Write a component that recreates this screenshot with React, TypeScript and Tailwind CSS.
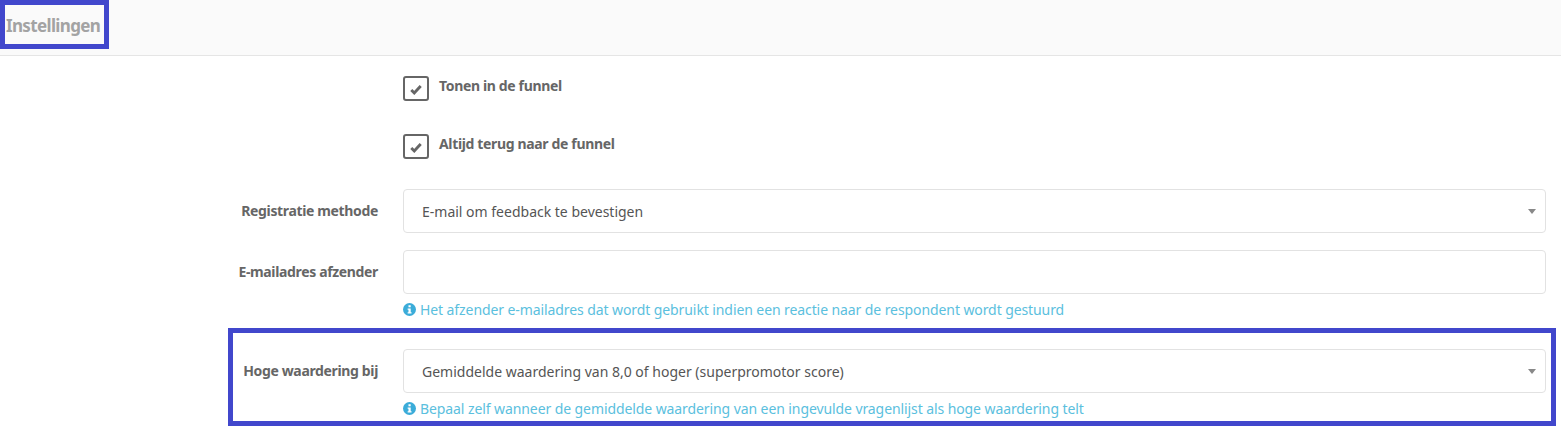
import type { ReactNode } from "react";

const font = "font-['Noto_Sans','Open_Sans',sans-serif]";

function CheckRow({ label, className }: { label: string; className: string }) {
  return (
    <div className={`flex items-start pl-[403px] ${className}`}>
      <span className="flex h-[25px] w-[26px] items-center justify-center rounded-[3px] border-2 border-[#666666] bg-white">
        <svg viewBox="0 0 14 12" className="mt-[2px] h-[11px] w-[12px]" fill="none">
          <path d="M1.5 6.5 L5 10 L12.5 2" stroke="#666666" strokeWidth="3.4" />
        </svg>
      </span>
      <span className="ml-[10px] text-[14px] leading-[20px] font-bold tracking-[-0.35px] text-[#666666]">
        {label}
      </span>
    </div>
  );
}

function Row({ label, children, help }: { label: string; children: ReactNode; help?: string }) {
  return (
    <div className="grid grid-cols-[378px_1fr] gap-x-[25px] pr-[15px]">
      <label className="flex h-[42px] items-center justify-end text-[14px] font-bold tracking-[-0.35px] text-[#666666]">
        {label}
      </label>
      <div>
        {children}
        {help && (
          <p className="mt-[5px] flex h-[20px] items-center text-[14px] tracking-[-0.09px] text-[#5bc0de]">
            <svg viewBox="0 0 14 14" className="mr-[4px] h-[13px] w-[13px] shrink-0">
              <circle cx="7" cy="7" r="7" fill="#3bacd9" />
              <rect x="5.9" y="2.4" width="2.4" height="2.2" fill="#fff" />
              <path d="M5 5.8 H8.3 V10 H9.2 V11.4 H5 V10 H5.9 V7.2 H5 Z" fill="#fff" />
            </svg>
            {help}
          </p>
        )}
      </div>
    </div>
  );
}

function SelectBox({ value }: { value: string }) {
  return (
    <div className="flex h-[44px] items-center justify-between rounded-[4px] border border-[#e2e2e2] bg-white pl-[18px] pr-[9px] text-[14px] text-[#555555]">
      <span>{value}</span>
      <svg viewBox="0 0 8 5" className="h-[5px] w-[8px]">
        <path d="M0 0 H8 L4 5 Z" fill="#888888" />
      </svg>
    </div>
  );
}

export default function App() {
  return (
    <div className={`relative h-[427px] w-[1561px] overflow-hidden bg-white ${font}`}>
      <header className="flex h-[56px] items-start border-b border-[#e5e5e5] bg-[#fafafa] pl-[6px] pt-[14px]">
        <h2 className="text-[17px] leading-[24px] font-bold tracking-[-0.65px] text-[#a3a3a3]">Instellingen</h2>
      </header>

      <CheckRow label="Tonen in de funnel" className="mt-[20px]" />
      <CheckRow label="Altijd terug naar de funnel" className="mt-[33px]" />

      <div className="mt-[30px]">
        <Row label="Registratie methode">
          <SelectBox value="E-mail om feedback te bevestigen" />
        </Row>
      </div>
      <div className="mt-[17px]">
        <Row
          label="E-mailadres afzender"
          help="Het afzender e-mailadres dat wordt gebruikt indien een reactie naar de respondent wordt gestuurd"
        >
          <div className="h-[44px] rounded-[4px] border border-[#e2e2e2] bg-white" />
        </Row>
      </div>
      <div className="mt-[30px]">
        <Row
          label="Hoge waardering bij"
          help="Bepaal zelf wanneer de gemiddelde waardering van een ingevulde vragenlijst als hoge waardering telt"
        >
          <SelectBox value="Gemiddelde waardering van 8,0 of hoger (superpromotor score)" />
        </Row>
      </div>

      {/* annotation frames on top of the screenshot */}
      <div className="absolute left-0 top-0 h-[49px] w-[109px] border-[5px] border-[#4147cc]" />
      <div className="absolute left-[228px] top-[328px] h-[98px] w-[1328px] border-[5px] border-[#4147cc]" />
    </div>
  );
}
